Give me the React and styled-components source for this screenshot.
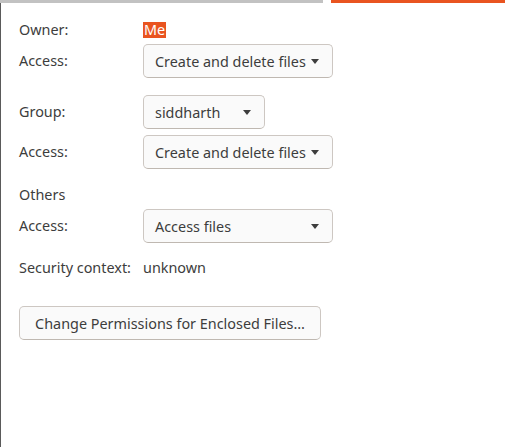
import React from "react";
import styled, { createGlobalStyle } from "styled-components";

const GlobalStyle = createGlobalStyle`
  html, body {
    margin: 0;
    padding: 0;
    background: #ffffff;
  }
  body {
    font-family: "Noto Sans", "Open Sans", sans-serif;
    font-size: 14.4px;
    color: #3d3d3d;
  }
`;

const Window = styled.div`
  width: 505px;
  height: 447px;
  display: flex;
  flex-direction: column;
  overflow: hidden;
`;

const TopStrip = styled.div`
  display: flex;
  height: 3px;
  flex-shrink: 0;
`;

const StripSegment = styled.div`
  width: ${(p) => (p.$width ? `${p.$width}px` : "auto")};
  flex: ${(p) => (p.$width ? "none" : 1)};
  background: ${(p) => p.$color};
`;

const Page = styled.div`
  flex: 1;
  border-left: 1px solid #5a5a5a;
  padding: 17px 0 0 18px;
  display: flex;
  flex-direction: column;
`;

const Row = styled.div`
  display: flex;
  align-items: center;
  min-height: ${(p) => p.$height || 20}px;
  margin-top: ${(p) => p.$gap || 0}px;
`;

const Label = styled.div`
  width: ${(p) => p.$width || 124}px;
  flex-shrink: 0;
  line-height: 20px;
`;

const Value = styled.div`
  line-height: 20px;
`;

const Highlight = styled.span`
  background: #e95420;
  color: #ffffff;
  padding: 0 1px;
  line-height: 16px;
  display: inline-block;
`;

const Dropdown = styled.div`
  box-sizing: border-box;
  width: ${(p) => p.$width}px;
  height: 34px;
  display: flex;
  align-items: center;
  justify-content: space-between;
  padding: 0 13px 0 11px;
  background: #fafafa;
  border: 1px solid #cdc7c2;
  border-bottom-color: #bfb8b1;
  border-radius: 5px;
  color: #3d3d3d;
`;

const Arrow = styled.span`
  width: 0;
  height: 0;
  border-left: 4.5px solid transparent;
  border-right: 4.5px solid transparent;
  border-top: 5px solid #3d3d3d;
  margin-top: 1px;
`;

const Button = styled.div`
  box-sizing: border-box;
  width: 302px;
  height: 34px;
  display: flex;
  align-items: center;
  justify-content: center;
  background: #fafafa;
  border: 1px solid #cdc7c2;
  border-bottom-color: #bfb8b1;
  border-radius: 5px;
  color: #3d3d3d;
`;

const Select = ({ width, children }) => (
  <Dropdown $width={width}>
    <span>{children}</span>
    <Arrow />
  </Dropdown>
);

export default function App() {
  return (
    <>
      <GlobalStyle />
      <Window>
        <TopStrip>
          <StripSegment $width={323} $color="#c2c2c2" />
          <StripSegment $width={8} $color="#ffffff" />
          <StripSegment $color="#e95420" />
        </TopStrip>
        <Page>
          <Row>
            <Label>Owner:</Label>
            <Value>
              <Highlight>Me</Highlight>
            </Value>
          </Row>
          <Row $height={34} $gap={4}>
            <Label>Access:</Label>
            <Select width={190}>Create and delete files</Select>
          </Row>
          <Row $height={34} $gap={17}>
            <Label>Group:</Label>
            <Select width={122}>siddharth</Select>
          </Row>
          <Row $height={34} $gap={6}>
            <Label>Access:</Label>
            <Select width={190}>Create and delete files</Select>
          </Row>
          <Row $gap={16}>
            <Label>Others</Label>
          </Row>
          <Row $height={34} $gap={4}>
            <Label>Access:</Label>
            <Select width={190}>Access files</Select>
          </Row>
          <Row $gap={15}>
            <Label>Security context:</Label>
            <Value>unknown</Value>
          </Row>
          <Row $height={34} $gap={28}>
            <Button>Change Permissions for Enclosed Files…</Button>
          </Row>
        </Page>
      </Window>
    </>
  );
}
